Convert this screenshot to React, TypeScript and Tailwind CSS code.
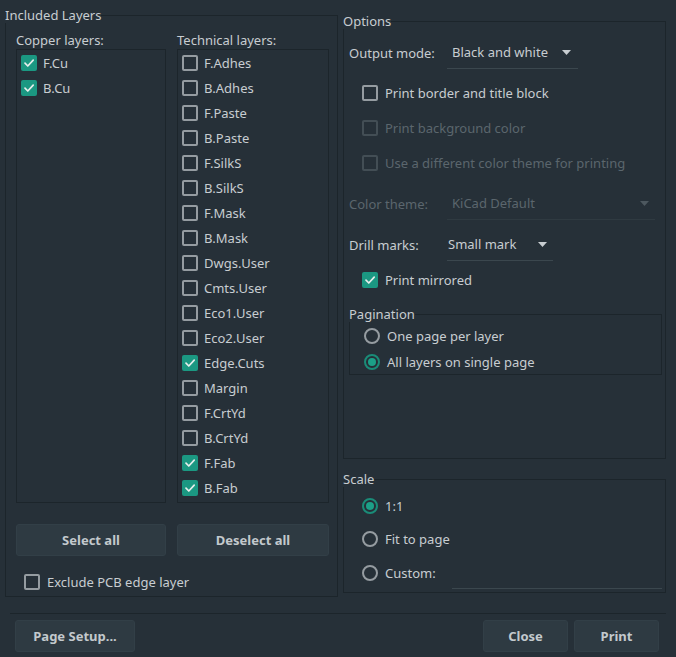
import React from "react";

const Check = ({ checked = false, disabled = false }: { checked?: boolean; disabled?: boolean }) =>
  checked ? (
    <span className="w-4 h-4 shrink-0 rounded-[2px] bg-[#1b9882] flex items-center justify-center">
      <svg width="14" height="14" viewBox="0 0 14 14">
        <path d="M3 7.2 L5.8 10 L11.2 4.2" stroke="#e6eeec" strokeWidth="1.7" fill="none" strokeLinecap="round" strokeLinejoin="round" />
      </svg>
    </span>
  ) : (
    <span
      className={
        disabled
          ? "w-4 h-4 shrink-0 rounded-[2px] border-2 border-[#434e55]"
          : "w-4 h-4 shrink-0 rounded-[2px] border-2 border-[#959ca1]"
      }
    />
  );

const Radio = ({ checked = false }: { checked?: boolean }) =>
  checked ? (
    <span className="w-4 h-4 shrink-0 rounded-full border-2 border-[#1a8c78] flex items-center justify-center">
      <span className="w-2 h-2 rounded-full bg-[#1ca088]" />
    </span>
  ) : (
    <span className="w-4 h-4 shrink-0 rounded-full border-2 border-[#959ca1]" />
  );

const Arrow = ({ dim = false }: { dim?: boolean }) => (
  <svg width="9" height="5" viewBox="0 0 9 5" className="shrink-0">
    <path d="M0 0 L9 0 L4.5 5 Z" fill={dim ? "#4d585f" : "#c8cdd1"} />
  </svg>
);

const copper = [
  { n: "F.Cu", c: true },
  { n: "B.Cu", c: true },
];
const tech = [
  { n: "F.Adhes", c: false },
  { n: "B.Adhes", c: false },
  { n: "F.Paste", c: false },
  { n: "B.Paste", c: false },
  { n: "F.SilkS", c: false },
  { n: "B.SilkS", c: false },
  { n: "F.Mask", c: false },
  { n: "B.Mask", c: false },
  { n: "Dwgs.User", c: false },
  { n: "Cmts.User", c: false },
  { n: "Eco1.User", c: false },
  { n: "Eco2.User", c: false },
  { n: "Edge.Cuts", c: true },
  { n: "Margin", c: false },
  { n: "F.CrtYd", c: false },
  { n: "B.CrtYd", c: false },
  { n: "F.Fab", c: true },
  { n: "B.Fab", c: true },
];

const LayerList = ({ items }: { items: { n: string; c: boolean }[] }) => (
  <div className="h-[454px] border border-[#1c252b]">
    {items.map((it) => (
      <div key={it.n} className="h-[25px] flex items-center pl-[4px] gap-[6px]">
        <Check checked={it.c} />
        <span>{it.n}</span>
      </div>
    ))}
  </div>
);

const Btn = ({ label, w }: { label: string; w: string }) => (
  <div
    className={
      "h-[32px] rounded-[3px] bg-[#2e3a42] border border-[#323f47] flex items-center justify-center font-bold text-[#c3c9cd] " +
      w
    }
  >
    {label}
  </div>
);

export default function App() {
  return (
    <div className="w-[676px] h-[657px] bg-[#263038] text-[#c8cdd1] text-[13px] leading-[16px] font-['Noto_Sans',sans-serif] overflow-hidden">
      <div className="flex pl-[5px] pt-[7px] gap-[5px]">
        {/* Included Layers */}
        <fieldset className="w-[333px] h-[590px] border border-[#1c252b] p-0 m-0 min-w-0">
          <legend className="p-0 -ml-px leading-[16px]">Included Layers</legend>
          <div className="pl-[10px] pt-[9px]">
            <div className="flex gap-[11px]">
              <div className="w-[150px]">
                <div className="h-[16px] mb-px">Copper layers:</div>
                <LayerList items={copper} />
              </div>
              <div className="w-[152px]">
                <div className="h-[16px] mb-px">Technical layers:</div>
                <LayerList items={tech} />
              </div>
            </div>
            <div className="flex gap-[11px] mt-[21px]">
              <Btn label="Select all" w="w-[150px]" />
              <Btn label="Deselect all" w="w-[152px]" />
            </div>
            <div className="flex items-center gap-[7px] mt-[18px] ml-[8px] h-[16px]">
              <Check />
              <span>Exclude PCB edge layer</span>
            </div>
          </div>
        </fieldset>

        {/* Right column */}
        <div className="flex flex-col w-[323px] mt-[6px]">
          <fieldset className="h-[446px] border border-[#1c252b] p-0 m-0 min-w-0">
            <legend className="p-0 -ml-px leading-[16px]">Options</legend>
            <div className="pl-[5px] pt-[7px]">
              <div className="flex items-center">
                <span className="w-[98px]">Output mode:</span>
                <div className="w-[131px] h-[33px] border-b border-[#3b474e] flex items-center pl-[5px] pr-[7px] justify-between">
                  <span>Black and white</span>
                  <Arrow />
                </div>
              </div>
              <div className="flex flex-col ml-[13px]">
                <div className="flex items-center gap-[7px] h-[16px] mt-[16px]">
                  <Check />
                  <span>Print border and title block</span>
                </div>
                <div className="flex items-center gap-[7px] h-[16px] mt-[19px] text-[#5b666d]">
                  <Check disabled />
                  <span>Print background color</span>
                </div>
                <div className="flex items-center gap-[7px] h-[16px] mt-[19px] text-[#5b666d]">
                  <Check disabled />
                  <span>Use a different color theme for printing</span>
                </div>
              </div>
              <div className="flex items-center mt-[16px] text-[#5b666d]">
                <span className="w-[98px]">Color theme:</span>
                <div className="w-[208px] h-[33px] border-b border-[#2f3a41] flex items-center pl-[5px] pr-[6px] justify-between">
                  <span>KiCad Default</span>
                  <Arrow dim />
                </div>
              </div>
              <div className="flex items-center mt-[8px]">
                <span className="w-[98px]">Drill marks:</span>
                <div className="w-[106px] h-[33px] border-b border-[#3b474e] flex items-center pl-[1px] pr-[6px] justify-between">
                  <span>Small mark</span>
                  <Arrow />
                </div>
              </div>
              <div className="flex items-center gap-[7px] h-[16px] mt-[11px] ml-[13px]">
                <Check checked />
                <span>Print mirrored</span>
              </div>
              <fieldset className="w-[313px] h-[69px] mt-[18px] border border-[#1c252b] p-0 m-0 min-w-0">
                <legend className="p-0 -ml-px leading-[16px]">Pagination</legend>
                <div className="pl-[14px] pt-[6px]">
                  <div className="flex items-center gap-[7px] h-[16px]">
                    <Radio />
                    <span>One page per layer</span>
                  </div>
                  <div className="flex items-center gap-[7px] h-[16px] mt-[10px]">
                    <Radio checked />
                    <span>All layers on single page</span>
                  </div>
                </div>
              </fieldset>
            </div>
          </fieldset>

          <fieldset className="h-[122px] mt-[12px] border border-[#1c252b] p-0 m-0 min-w-0">
            <legend className="p-0 -ml-px leading-[16px]">Scale</legend>
            <div className="pl-[18px] pt-[11px]">
              <div className="flex items-center gap-[7px] h-[16px]">
                <Radio checked />
                <span>1:1</span>
              </div>
              <div className="flex items-center gap-[7px] h-[16px] mt-[17px]">
                <Radio />
                <span>Fit to page</span>
              </div>
              <div className="flex items-center gap-[7px] h-[33px] mt-[9px]">
                <Radio />
                <span className="w-[60px]">Custom:</span>
                <div className="w-[210px] h-[33px] border-b border-[#3b474e]" />
              </div>
            </div>
          </fieldset>
        </div>
      </div>

      <div className="ml-[10px] w-[656px] h-px bg-[#1c252b] mt-[16px]" />

      <div className="flex items-center mt-[6px] pl-[15px] pr-[17px]">
        <Btn label="Page Setup..." w="w-[120px]" />
        <div className="flex-1" />
        <div className="flex gap-[6px]">
          <Btn label="Close" w="w-[85px]" />
          <Btn label="Print" w="w-[85px]" />
        </div>
      </div>
    </div>
  );
}
